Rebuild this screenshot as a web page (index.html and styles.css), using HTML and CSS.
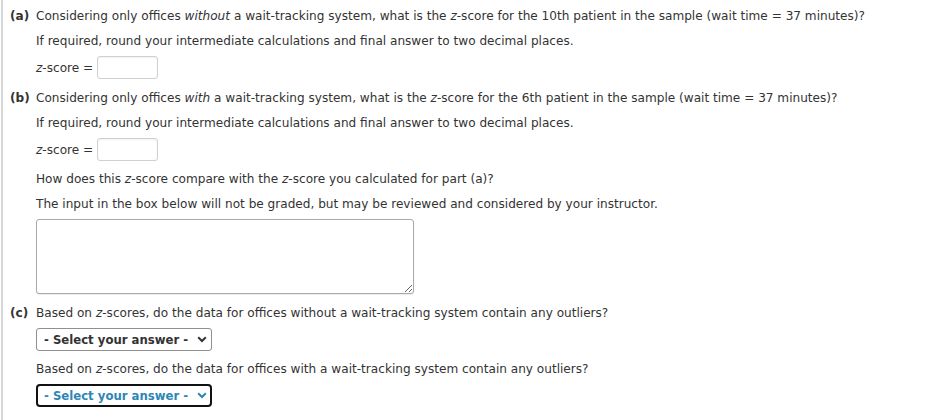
FILE: index.html
```html
<!DOCTYPE html>
<html>
<head>
<meta charset="utf-8">
<link rel="stylesheet" href="styles.css">
</head>
<body>
<div class="page">
  <div class="part">
    <div class="tag">(a)</div>
    <div class="body">
      <p class="line first">Considering only offices <i>without</i> a wait-tracking system, what is the <i>z</i>-score for the 10th patient in the sample (wait time = 37 minutes)?</p>
      <p class="line">If required, round your intermediate calculations and final answer to two decimal places.</p>
      <div class="field"><span><i>z</i>-score =</span><input class="num" type="text"></div>
    </div>
  </div>
  <div class="part">
    <div class="tag">(b)</div>
    <div class="body">
      <p class="line first">Considering only offices <i>with</i> a wait-tracking system, what is the <i>z</i>-score for the 6th patient in the sample (wait time = 37 minutes)?</p>
      <p class="line">If required, round your intermediate calculations and final answer to two decimal places.</p>
      <div class="field"><span><i>z</i>-score =</span><input class="num" type="text"></div>
      <p class="line after">How does this <i>z</i>-score compare with the <i>z</i>-score you calculated for part (a)?</p>
      <p class="line">The input in the box below will not be graded, but may be reviewed and considered by your instructor.</p>
      <textarea class="notes"></textarea>
    </div>
  </div>
  <div class="part">
    <div class="tag">(c)</div>
    <div class="body">
      <p class="line first">Based on <i>z</i>-scores, do the data for offices without a wait-tracking system contain any outliers?</p>
      <div class="sel"><select class="pick"><option>- Select your answer -</option></select><svg class="chev" width="10" height="7" viewBox="0 0 10 7"><path d="M1.2 1.3 L5 5 L8.8 1.3" fill="none" stroke="#333" stroke-width="2"/></svg></div>
      <p class="line after">Based on <i>z</i>-scores, do the data for offices with a wait-tracking system contain any outliers?</p>
      <div class="sel focus"><select class="pick"><option>- Select your answer -</option></select><svg class="chev" width="10" height="7" viewBox="0 0 10 7"><path d="M1.2 1.3 L5 5 L8.8 1.3" fill="none" stroke="#2d86b5" stroke-width="2"/></svg></div>
    </div>
  </div>
</div>
</body>
</html>
```
FILE: styles.css
```css
html, body {
  margin: 0;
  padding: 0;
  background: #fff;
}
.page {
  margin-left: 1px;
  border-left: 2px solid #d6d6d6;
  min-height: 420px;
  padding: 8px 0 0 7px;
  box-sizing: border-box;
  font-family: "DejaVu Sans", Verdana, sans-serif;
  font-size: 12.1px;
  color: #333;
}
.part {
  display: flex;
  margin-bottom: 11px;
}
.tag {
  width: 26px;
  font-weight: bold;
  line-height: 16px;
}
.body {
  display: flex;
  flex-direction: column;
  align-items: flex-start;
}
.line {
  margin: 9px 0 0 0;
  line-height: 16px;
}
.line.first { margin-top: 0; }
.line.after { margin-top: 10px; }
.field {
  display: flex;
  align-items: center;
  gap: 4px;
  margin-top: 7px;
}
.num {
  width: 61px;
  height: 23px;
  box-sizing: border-box;
  border: 1px solid #d0d0d0;
  border-radius: 3px;
  box-shadow: inset 0 1px 2px rgba(0,0,0,0.06);
  margin: 0;
  padding: 0 4px;
}
.notes {
  margin-top: 7px;
  width: 378px;
  height: 75px;
  box-sizing: border-box;
  border: 1px solid #a9a9a9;
  border-radius: 3px;
  box-shadow: 0 1px 1px rgba(0,0,0,0.08);
  resize: both;
}
.sel {
  position: relative;
  margin-top: 7px;
  width: 176px;
  height: 23px;
}
.pick {
  appearance: none;
  -webkit-appearance: none;
  width: 176px;
  height: 23px;
  box-sizing: border-box;
  margin: 0;
  border: 1px solid #8f8f8f;
  border-radius: 3px;
  background: #fff;
  padding: 0 0 0 7px;
  font-family: "DejaVu Sans", Verdana, sans-serif;
  font-size: 11.7px;
  font-weight: bold;
  color: #333;
}
.sel.focus .pick {
  border: 2px solid #111;
  border-radius: 4px;
  padding-left: 6px;
  color: #2d86b5;
}
.chev {
  position: absolute;
  right: 5px;
  top: 8px;
}
```
